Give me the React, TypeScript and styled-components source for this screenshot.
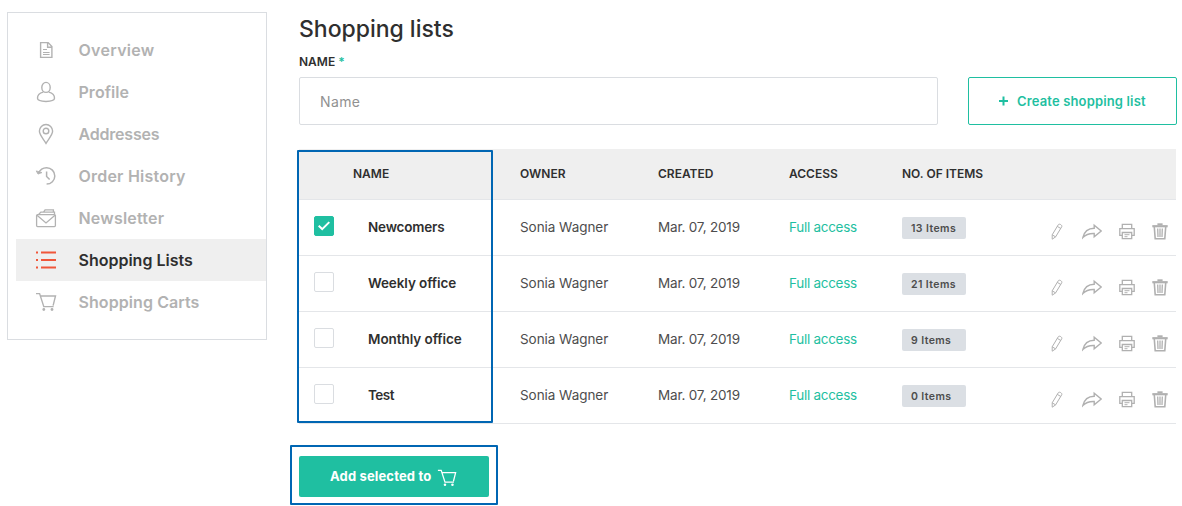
import React from "react";
import styled, { createGlobalStyle } from "styled-components";

const color = {
  text: "#2f2f2f",
  body: "#4d4d4d",
  muted: "#b2b2b2",
  line: "#e4e6e9",
  border: "#dadde1",
  panel: "#efefef",
  accent: "#1fbfa1",
  active: "#f0563a",
  badge: "#dbdfe4",
  frame: "#0066b3",
};

const GlobalStyle = createGlobalStyle`
  *, *::before, *::after { box-sizing: border-box; }
  body {
    margin: 0;
    background: #fff;
    color: ${color.text};
    font-family: Inter, "Liberation Sans", sans-serif;
  }
  button, input { font-family: inherit; }
`;

const Page = styled.div`
  display: flex;
  align-items: flex-start;
  gap: 32px;
  width: 1182px;
  height: 506px;
  padding: 12px 5px 0 7px;
  overflow: hidden;
`;

const Sidebar = styled.nav`
  flex: none;
  width: 260px;
  height: 328px;
  padding: 16px 0 0 8px;
  border: 1px solid ${color.border};
`;

const NavItem = styled.a<{ $active?: boolean; $track: number }>`
  display: flex;
  align-items: center;
  gap: 21.5px;
  height: 42px;
  padding-left: 19px;
  background: ${(p) => (p.$active ? color.panel : "transparent")};
  color: ${(p) => (p.$active ? color.text : color.muted)};
  font-size: 16px;
  font-weight: 600;
  letter-spacing: ${(p) => p.$track}px;

  svg {
    flex: none;
    color: ${(p) => (p.$active ? color.active : color.muted)};
  }
`;

const Main = styled.main`
  width: 878px;
`;

const Title = styled.h1`
  margin: 3px 0 0;
  font-size: 23px;
  line-height: 28px;
  font-weight: 500;
  letter-spacing: -0.02px;
`;

const Label = styled.label`
  display: block;
  margin: 11px 0 8px;
  font-size: 12px;
  line-height: 15px;
  font-weight: 600;
  letter-spacing: 0;
`;

const Required = styled.span`
  color: ${color.accent};
`;

const CreateRow = styled.div`
  display: flex;
  gap: 30px;
  height: 48px;
`;

const NameInput = styled.input`
  width: 639px;
  padding: 0 20px;
  border: 1px solid ${color.border};
  border-radius: 2px;
  color: ${color.text};
  font-size: 14px;
  letter-spacing: 0.4px;
  outline: none;

  &::placeholder { color: #919191; opacity: 1; }
`;

const CreateButton = styled.button`
  display: flex;
  align-items: center;
  gap: 9px;
  width: 209px;
  padding: 0 0 0 30px;
  border: 1px solid ${color.accent};
  border-radius: 2px;
  background: #fff;
  color: ${color.accent};
  font-size: 13px;
  font-weight: 600;
  letter-spacing: 0.15px;
  white-space: nowrap;
`;

const Table = styled.div`
  position: relative;
  width: 877px;
  margin-top: 24px;
`;

const TableRow = styled.div<{ $head?: boolean }>`
  display: grid;
  grid-template-columns: ${(p) => (p.$head ? 54 : 69)}px ${(p) => (p.$head ? 167 : 152)}px 138px 131px 113px 1fr auto;
  align-items: center;
  height: ${(p) => (p.$head ? 51 : 56)}px;
  border-bottom: 1px solid ${color.line};
  background: ${(p) => (p.$head ? color.panel : "#fff")};
`;

const HeadCell = styled.span`
  padding-bottom: 1px;
  font-size: 12px;
  font-weight: 600;
`;

const Cell = styled.span<{ $kind?: "name" | "link"; $track?: number }>`
  padding-bottom: 2px;
  font-size: 13.5px;
  font-weight: ${(p) => (p.$kind === "name" ? 600 : 400)};
  color: ${(p) => (p.$kind === "name" ? color.text : p.$kind === "link" ? color.accent : color.body)};
  letter-spacing: ${(p) => p.$track ?? 0}px;
`;

const Checkbox = styled.span<{ $checked: boolean }>`
  display: flex;
  align-items: center;
  justify-content: center;
  width: 20px;
  height: 20px;
  margin: 0 0 4px 15px;
  border: 1px solid ${(p) => (p.$checked ? color.accent : color.border)};
  border-radius: 2px;
  background: ${(p) => (p.$checked ? color.accent : "#fff")};
  color: #fff;
`;

const Badge = styled.span`
  width: 64px;
  height: 22px;
  margin-top: 1px;
  border-radius: 2px;
  background: ${color.badge};
  color: ${color.body};
  font-size: 10.5px;
  line-height: 23px;
  font-weight: 600;
  letter-spacing: 0.4px;
  padding-left: 9px;
`;

const Actions = styled.span`
  display: flex;
  align-items: center;
  padding: 7px 8px 0 0;
  color: #b0b0b0;

  svg { display: block; }
  svg + svg { margin-left: 17px; }
  svg:nth-child(2) { margin-left: 19px; }
`;

const ColumnFrame = styled.div`
  position: absolute;
  left: -2px;
  top: 1px;
  width: 196px;
  height: 273px;
  border: 2px solid ${color.frame};
  border-radius: 1px;
  pointer-events: none;
`;

const ButtonFrame = styled.div`
  width: 208px;
  height: 60px;
  margin: 21px 0 0 -9px;
  padding: 9px 7px 8px;
  border: 2px solid ${color.frame};
  border-radius: 1px;
`;

const AddButton = styled.button`
  display: flex;
  align-items: center;
  gap: 6px;
  width: 190px;
  height: 41px;
  padding: 0 0 1px 31px;
  border: 0;
  border-radius: 2px;
  background: ${color.accent};
  color: #fff;
  font-size: 13px;
  font-weight: 700;
  letter-spacing: 0.15px;
  white-space: nowrap;

  svg { margin-top: 4px; }
`;

type IconProps = { w?: number; h?: number; box?: string; children: React.ReactNode; sw?: number };
const Icon = ({ w = 22, h = 22, box = "0 0 22 22", sw = 1.3, children }: IconProps) => (
  <svg width={w} height={h} viewBox={box} fill="none" stroke="currentColor" strokeWidth={sw}>
    {children}
  </svg>
);

const DocumentIcon = () => (
  <Icon sw={1.4}>
    <path d="M5.6 3.6h7.6l3.7 3.9v10.9H5.6zM12.6 3.8v4.4h4.2" />
    <path d="M8 10.500h4M8 13.500h6.600M8 15.500h6.600" strokeWidth="1" />
  </Icon>
);
const PersonIcon = () => (
  <Icon sw={1.400}>
    <ellipse cx="11" cy="6.400" rx="4.200" ry="5" />
    <path d="M8.300 11.100C4.400 12.100 2.400 14.200 2.500 17.300c.1 4.200 16.900 4.200 17 0 .1-3.100-1.900-5.200-5.800-6.200" />
  </Icon>
);
const PinIcon = () => (
  <Icon sw={1.400}>
    <path d="M11 20.300C8.800 16.400 4.400 12.200 4.400 8.100a6.600 6.600 0 0 1 13.200 0c0 4.100-4.400 8.300-6.600 12.200z" />
    <circle cx="11" cy="8" r="2.800" />
  </Icon>
);
const HistoryIcon = () => (
  <Icon sw={1.500}>
    <path d="M3.300 8.400C5 4.700 8 2.700 11.600 2.700a8.100 8.100 0 0 1 0 16.400" />
    <path d="M1.200 5.900l1.800 3.200 4-1.500z" fill="currentColor" strokeWidth="0.800" />
    <path d="M11.600 6.500v5l3 3" />
  </Icon>
);
const MailIcon = () => (
  <Icon sw={1.300}>
    <rect x="1.600" y="7.600" width="18.800" height="12" rx="1" />
    <path d="M2 8.200l9 7.800 9-7.800M3.600 7.400l2.200-2.200h13.700v2.400M8.500 5.200l1.600-2.400h8.300v2.400" />
  </Icon>
);
const ListIcon = () => (
  <Icon sw={2.200}>
    <path d="M1 3.500h2M6 3.500h15M1 11h2M6 11h15M1 18.500h2M6 18.500h15" />
  </Icon>
);
const CartIcon = ({ size = 22 }: { size?: number }) => (
  <Icon w={size} h={size} sw={1.400}>
    <path d="M1 2.600h3.600l4.200 13h9.800M5.400 5h15.100l-2.400 9.600" />
    <circle cx="8.800" cy="18.500" r="1.400" fill="currentColor" stroke="none" />
    <circle cx="17" cy="18.500" r="1.400" fill="currentColor" stroke="none" />
  </Icon>
);
const PencilIcon = () => (
  <Icon w={12} h={17} box="0 0 12 17" sw={1}>
    <path d="M1.200 11.800L7.300 1.700c.9-1.400 4.300.4 3.400 2.100L4.600 13.900l-3.400 2.300zM1.200 11.800l3.400 2.100M6.300 3.400l3.500 2.100" />
  </Icon>
);
const ShareIcon = () => (
  <Icon w={20} h={17} box="0 0 20 17" sw={1.400}>
    <path d="M.8 14.600C2.300 8.200 6.400 5.300 12.200 5.200V2.200l7 5.800-7 5.800v-3.300c-5-.2-8.300.8-11.400 4.100z" />
  </Icon>
);
const PrintIcon = () => (
  <Icon w={16} h={17} box="0 0 16 17" sw={1.300}>
    <path d="M3.300 5.500V1.300h9.400v4.200M3.300 12.300H.8V5.600h14.400v6.700h-2.500M3.300 9.500h9.400v6.200H3.300z" />
    <path d="M5.500 11.700h5M5.500 13.700h3" strokeWidth="1" />
  </Icon>
);
const TrashIcon = () => (
  <Icon w={16} h={17} box="0 0 16 17" sw={1.600}>
    <path d="M.3 3.200h15.400" strokeWidth="2.200" />
    <path d="M5.400 1.200h5.200" strokeWidth="1.800" />
    <path d="M2.300 4l.9 11.800h9.600L13.700 4" />
    <path d="M5.700 5.500l.3 8.500M8 5.500V14M10.300 5.500L10 14" strokeWidth="1.300" />
  </Icon>
);

const navItems = [
  { label: "Overview", icon: <DocumentIcon />, track: 0.3 },
  { label: "Profile", icon: <PersonIcon />, track: 0.05 },
  { label: "Addresses", icon: <PinIcon />, track: -0.2 },
  { label: "Order History", icon: <HistoryIcon />, track: 0.22 },
  { label: "Newsletter", icon: <MailIcon />, track: 0.2 },
  { label: "Shopping Lists", icon: <ListIcon />, track: 0, active: true },
  { label: "Shopping Carts", icon: <CartIcon />, track: 0.08 },
];

const lists = [
  { name: "Newcomers", items: 13, checked: true, track: -0.2 },
  { name: "Weekly office", items: 21, checked: false, track: -0.1 },
  { name: "Monthly office", items: 9, checked: false, track: -0.06 },
  { name: "Test", items: 0, checked: false, track: -0.5 },
];

export default function App() {
  return (
    <>
      <GlobalStyle />
      <Page>
        <Sidebar>
          {navItems.map((item) => (
            <NavItem key={item.label} $active={item.active} $track={item.track}>
              {item.icon}
              {item.label}
            </NavItem>
          ))}
        </Sidebar>
        <Main>
          <Title>Shopping lists</Title>
          <Label htmlFor="list-name">
            NAME <Required>*</Required>
          </Label>
          <CreateRow>
            <NameInput id="list-name" placeholder="Name" />
            <CreateButton>
              <Icon w={9} h={10} box="0 0 9 10" sw={2}>
                <path d="M0 5h9M4.500 .5v9" />
              </Icon>
              Create shopping list
            </CreateButton>
          </CreateRow>
          <Table>
            <TableRow $head>
              <span />
              <HeadCell>NAME</HeadCell>
              <HeadCell>OWNER</HeadCell>
              <HeadCell>CREATED</HeadCell>
              <HeadCell>ACCESS</HeadCell>
              <HeadCell>NO. OF ITEMS</HeadCell>
              <span />
            </TableRow>
            {lists.map((list) => (
              <TableRow key={list.name}>
                <Checkbox $checked={list.checked}>
                  {list.checked && (
                    <Icon w={12} h={10} box="0 0 12 10" sw={2}>
                      <path d="M.7 4.800l3.500 3.300L11.300 1.100" />
                    </Icon>
                  )}
                </Checkbox>
                <Cell $kind="name" $track={list.track}>{list.name}</Cell>
                <Cell $track={-0.05}>Sonia Wagner</Cell>
                <Cell $track={-0.18}>Mar. 07, 2019</Cell>
                <Cell $kind="link" $track={-0.28}>Full access</Cell>
                <Badge>{list.items} Items</Badge>
                <Actions>
                  <PencilIcon />
                  <ShareIcon />
                  <PrintIcon />
                  <TrashIcon />
                </Actions>
              </TableRow>
            ))}
            <ColumnFrame />
          </Table>
          <ButtonFrame>
            <AddButton>
              Add selected to
              <CartIcon size={20} />
            </AddButton>
          </ButtonFrame>
        </Main>
      </Page>
    </>
  );
}
